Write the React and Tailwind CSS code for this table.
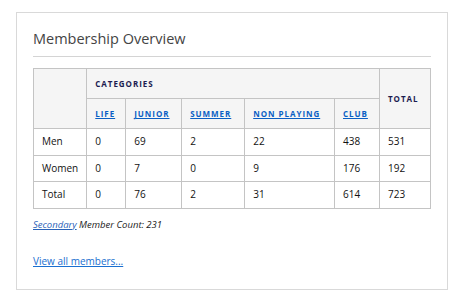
import React from 'react';

const categories = ['Life', 'Junior', 'Summer', 'Non Playing', 'Club'];

const rows = [
  { label: 'Men', values: [0, 69, 2, 22, 438], total: 531 },
  { label: 'Women', values: [0, 7, 0, 9, 176], total: 192 },
  { label: 'Total', values: [0, 76, 2, 31, 614], total: 723 },
];

const cell = 'border border-[#c4c4c4] px-2 align-middle';
const headText = 'text-[8px] font-bold uppercase tracking-[0.12em] text-[#1c1c50]';

const App = () => {
  return (
    <div className="min-h-screen bg-white pl-4 pt-3 font-['Open_Sans',sans-serif]">
      <div className="w-[432px] h-[278px] border border-[#d9d9d9] px-4 pt-[16px]">
        <h2 className="text-[14.5px] leading-[20px] text-[#444] pb-[7px] border-b border-[#d4d4d4]">
          Membership Overview
        </h2>

        <table className="mt-[11px] w-[398px] border-collapse text-[10px] text-[#111]">
          <thead className="bg-[#f5f5f5]">
            <tr className="h-[30px]">
              <th rowSpan={2} className={`${cell} w-[53px]`}></th>
              <th colSpan={5} className={`${cell} text-left ${headText}`}>Categories</th>
              <th rowSpan={2} className={`${cell} text-left ${headText} w-[51px]`}>Total</th>
            </tr>
            <tr className="h-[30px]">
              {categories.map((c, i) => (
                <th
                  key={c}
                  className={`${cell} text-left ${['w-[39px]', 'w-[56px]', 'w-[63px]', 'w-[90px]', 'w-[45px]'][i]}`}
                >
                  <a href="#" className="text-[8px] font-bold uppercase tracking-[0.12em] text-[#0b5fc4] underline">
                    {c}
                  </a>
                </th>
              ))}
            </tr>
          </thead>
          <tbody>
            {rows.map((r) => (
              <tr key={r.label} className="h-[26.5px]">
                <td className={cell}>{r.label}</td>
                {r.values.map((v, i) => (
                  <td key={i} className={cell}>{v}</td>
                ))}
                <td className={cell}>{r.total}</td>
              </tr>
            ))}
          </tbody>
        </table>

        <p className="mt-[9px] text-[9.5px] italic text-[#222]">
          <a href="#" className="text-[#2a62b8] underline">Secondary</a> Member Count: 231
        </p>

        <a href="#" className="block mt-[22px] w-fit text-[10px] text-[#1a6fd0] underline">
          View all members...
        </a>
      </div>
    </div>
  );
};

export default App;
